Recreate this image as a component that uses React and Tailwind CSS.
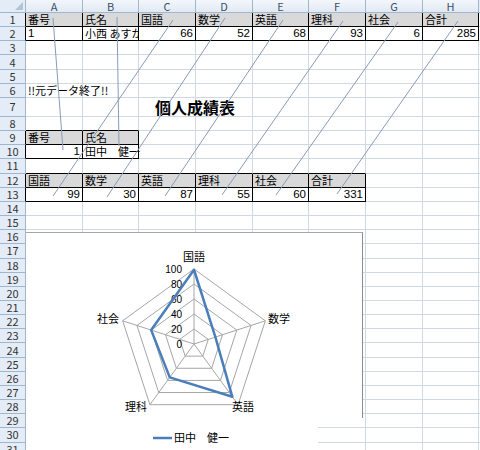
import React from 'react'

const COLS = ['A', 'B', 'C', 'D', 'E', 'F', 'G', 'H']
const ROWS = 31
const NUM = { num: true, right: true }

// cell contents keyed by "row,col" (col 0 = A)
const cells = {}
const put = (r, c, t, o = {}) => { cells[`${r},${c}`] = { t, ...o } }

;['番号', '氏名', '国語', '数学', '英語', '理科', '社会', '合計'].forEach((t, i) => put(1, i, t))
put(2, 0, '1', { num: true })
put(2, 1, '小西 あすか', { clip: true })
;['66', '52', '68', '93', '6', '285'].forEach((t, i) => put(2, i + 2, t, NUM))
put(6, 0, '!!元データ終了!!', { spill: true })
put(7, 2, '個人成績表', { title: true })
put(9, 0, '番号')
put(9, 1, '氏名')
put(10, 0, '1', NUM)
put(10, 1, '田中　健一')
;['国語', '数学', '英語', '理科', '社会', '合計'].forEach((t, i) => put(12, i, t))
;['99', '30', '87', '55', '60', '331'].forEach((t, i) => put(13, i, t, NUM))

const boxed = (r, c) =>
  (r >= 1 && r <= 2 && c >= 0 && c <= 7) ||
  (r >= 9 && r <= 10 && c >= 0 && c <= 1) ||
  (r >= 12 && r <= 13 && c >= 0 && c <= 5)
const filled = (r, c) => (r === 1 && c <= 7) || (r === 9 && c <= 1) || (r === 12 && c <= 5)

function Cell({ r, c }) {
  const d = cells[`${r},${c}`]
  const right = boxed(r, c) || boxed(r, c + 1) ? 'border-r-black' : 'border-r-[#d0d7e5]'
  const bottom = boxed(r, c) || boxed(r + 1, c) ? 'border-b-black' : 'border-b-[#d0d7e5]'
  const bg = filled(r, c) ? 'bg-[#d9d9d9]' : ''
  let inner = null
  if (d) {
    if (d.title) {
      inner = (
        <span className="absolute left-[16px] top-[1px] whitespace-nowrap text-[16px] font-bold leading-none text-black">
          {d.t}
        </span>
      )
    } else {
      inner = (
        <span
          className={`whitespace-nowrap leading-none text-black ${d.num ? 'font-["Liberation_Sans",sans-serif] text-[11.5px]' : 'text-[11px]'}`}
        >
          {d.t}
        </span>
      )
    }
  }
  return (
    <div
      className={`relative flex items-center border-r border-b px-[2px] ${right} ${bottom} ${bg} ${
        d && d.right ? 'justify-end' : 'justify-start'
      } ${d && d.clip ? 'overflow-hidden' : 'overflow-visible'} ${d && (d.spill || d.title) ? 'z-10' : ''}`}
    >
      {inner}
    </div>
  )
}

function Sheet() {
  const out = []
  // column header row
  out.push(
    <div key="corner" className="relative border-r border-b border-[#9eb6ce] bg-[#e4ecf7]">
      <div className="absolute bottom-[2px] right-[2px] h-0 w-0 border-l-[8px] border-b-[8px] border-l-transparent border-b-[#b4c2d6]" />
    </div>
  )
  COLS.forEach((l) =>
    out.push(
      <div
        key={`h${l}`}
        className="flex items-center justify-center border-r border-b border-r-[#9eb6ce] border-b-[#9eb6ce] bg-gradient-to-b from-[#f3f7fc] to-[#e1e9f4] text-[11px] leading-none text-[#3b4f6b]"
      >
        {l}
      </div>
    )
  )
  out.push(<div key="hx" className="border-b border-[#9eb6ce] bg-[#e4ecf7]" />)

  for (let r = 1; r <= ROWS; r++) {
    out.push(
      <div
        key={`r${r}`}
        className={`flex items-center justify-center border-r border-b border-b-[#9eb6ce] bg-[#e4ecf7] text-[11px] leading-none text-[#333] ${
          boxed(r, 0) ? 'border-r-black' : 'border-r-[#9eb6ce]'
        }`}
      >
        {r}
      </div>
    )
    for (let c = 0; c < 8; c++) out.push(<Cell key={`${r},${c}`} r={r} c={c} />)
    out.push(<div key={`x${r}`} className="border-b border-[#d0d7e5]" />)
  }
  return (
    <div className="grid grid-cols-[26px_57px_56px_57px_57px_56px_57px_57px_56px_1fr] grid-rows-[13px_repeat(6,14.17px)_19px_repeat(24,14.17px)]">
      {out}
    </div>
  )
}

// radar chart geometry (chart-local coordinates)
const CX = 168
const CY = 112
const R = 75
const pt = (k, v) => {
  const a = ((-90 + 72 * k) * Math.PI) / 180
  const rr = (v / 100) * R
  return [CX + rr * Math.cos(a), CY + rr * Math.sin(a)]
}
const poly = (vals) => vals.map((v, k) => pt(k, v).map((n) => n.toFixed(2)).join(',')).join(' ')
const scores = [99, 30, 87, 55, 60]

function RadarChart() {
  return (
    <div className="absolute left-[26px] top-[232px] h-[218px] w-[337px]">
      <div className="h-[186px] w-[337px] border-t border-r border-t-[#a6a6a6] border-r-[#8c8c8c] bg-white" />
      <div className="h-[32px] w-[292px] bg-white" />
      <svg className="absolute left-0 top-0" width="337" height="218" viewBox="0 0 337 218">
        {[20, 40, 60, 80, 100].map((v) => (
          <polygon key={v} points={poly([v, v, v, v, v])} fill="none" stroke="#a6a6a6" strokeWidth="1" />
        ))}
        {[0, 1, 2, 3, 4].map((k) => {
          const [x, y] = pt(k, 100)
          return <line key={k} x1={CX} y1={CY} x2={x} y2={y} stroke="#a6a6a6" strokeWidth="1" />
        })}
        <g fontFamily="'Liberation Sans', sans-serif" fontSize="10" fill="#000" textAnchor="end">
          {[0, 20, 40, 60, 80, 100].map((v) => (
            <text key={v} x="156" y={CY - v * 0.75 + 3.5}>
              {v}
            </text>
          ))}
        </g>
        <polygon points={poly(scores)} fill="none" stroke="#4a7ebb" strokeWidth="2.5" strokeLinejoin="round" />
        <g fontFamily="'Noto Sans CJK JP', sans-serif" fontSize="11" fill="#000">
          <text x="168" y="29" textAnchor="middle">国語</text>
          <text x="242" y="91">数学</text>
          <text x="206" y="179">英語</text>
          <text x="99" y="179">理科</text>
          <text x="71" y="91">社会</text>
        </g>
        <line x1="127" y1="206" x2="146" y2="206" stroke="#4a7ebb" strokeWidth="2.5" />
        <text x="148" y="210" fontFamily="'Noto Sans CJK JP', sans-serif" fontSize="11" fill="#000">
          田中　健一
        </text>
      </svg>
    </div>
  )
}

const LINKS = [
  [53, 18, 63, 150],
  [117, 17, 119, 146],
  [173, 20, 53, 196],
  [225, 18, 107, 197],
  [283, 20, 165, 196],
  [343, 21, 222, 195],
  [398, 22, 276, 195],
  [458, 21, 337, 194],
]

export default function App() {
  return (
    <div className="relative h-[450px] w-[480px] overflow-hidden bg-white font-['Noto_Sans_CJK_JP',sans-serif]">
      <Sheet />
      <RadarChart />
      <svg className="pointer-events-none absolute left-0 top-0 z-20" width="480" height="450">
        {LINKS.map(([x1, y1, x2, y2], i) => (
          <line key={i} x1={x1} y1={y1} x2={x2} y2={y2} stroke="#8a9bb8" strokeWidth="1" />
        ))}
      </svg>
    </div>
  )
}
